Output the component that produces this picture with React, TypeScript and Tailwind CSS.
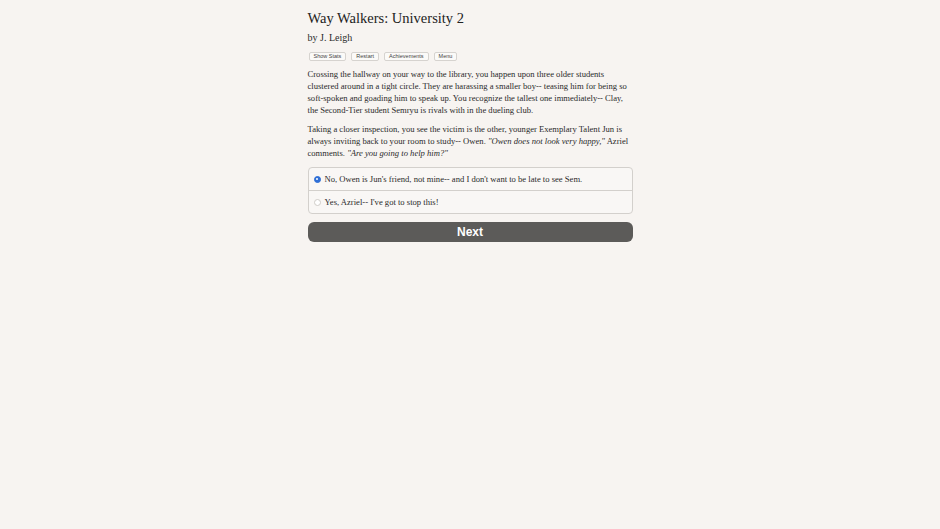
import React, { useState } from 'react';

const serif = { fontFamily: '"Liberation Serif", "DejaVu Serif", serif' };

const choices = [
  "No, Owen is Jun's friend, not mine-- and I don't want to be late to see Sem.",
  "Yes, Azriel-- I've got to stop this!",
];

const App: React.FC = () => {
  const [picked, setPicked] = useState(0);

  return (
    <div className="min-h-[529px] w-full bg-[#f7f4f1] text-[#2b2b2b]" style={serif}>
      <div className="mx-auto w-[325px] pt-[9px]">
        <h1 className="text-[14.5px] leading-[18px] text-[#222]">Way Walkers: University 2</h1>
        <p className="mt-[4px] text-[10px] leading-[14px]">by J. Leigh</p>

        <div className="mt-[7px] flex gap-[5px] pl-[1px]">
          {['Show Stats', 'Restart', 'Achievements', 'Menu'].map((label) => (
            <button
              key={label}
              className="h-[9px] rounded-[2px] border border-[#d6d3cf] bg-[#fbfaf8] px-[4px] text-[5.5px] leading-[7px] text-[#444]"
              style={{ fontFamily: '"Liberation Sans", Arial, sans-serif' }}
            >
              {label}
            </button>
          ))}
        </div>

        <div className="mt-[7px] text-[8.6px] leading-[12px] text-[#2a2a2a]">
          <p>
            Crossing the hallway on your way to the library, you happen upon three older students
            clustered around in a tight circle. They are harassing a smaller boy-- teasing him for
            being so soft-spoken and goading him to speak up. You recognize the tallest one
            immediately-- Clay, the Second-Tier student Semryu is rivals with in the dueling club.
          </p>
          <p className="mt-[7px]">
            Taking a closer inspection, you see the victim is the other, younger Exemplary Talent Jun
            is always inviting back to your room to study-- Owen. <i>"Owen does not look very happy,"</i>{' '}
            Azriel comments. <i>"Are you going to help him?"</i>
          </p>
        </div>

        <div className="mt-[8px] rounded-[4px] border border-[#d3d0cc] bg-[#f9f7f5]">
          {choices.map((c, i) => (
            <label
              key={c}
              className={`flex cursor-pointer items-center gap-[4px] px-[5px] text-[8.6px] text-[#2a2a2a] ${
                i > 0 ? 'h-[23px] border-t border-[#d3d0cc]' : 'h-[22px]'
              }`}
            >
              <span
                className={`flex h-[7px] w-[7px] items-center justify-center rounded-full border ${
                  picked === i ? 'border-[#2f6fd6] bg-[#2f6fd6]' : 'border-[#cfccc8] bg-white'
                }`}
                onClick={() => setPicked(i)}
              >
                {picked === i && <span className="h-[2.5px] w-[2.5px] rounded-full bg-white" />}
              </span>
              <span>{c}</span>
            </label>
          ))}
        </div>

        <button
          className="mt-[8px] flex h-[20px] w-full items-center justify-center rounded-[6px] bg-[#5c5b59] text-[12px] font-bold text-white"
          style={{ fontFamily: '"Liberation Sans", Arial, sans-serif' }}
        >
          Next
        </button>
      </div>
    </div>
  );
};

export default App;
